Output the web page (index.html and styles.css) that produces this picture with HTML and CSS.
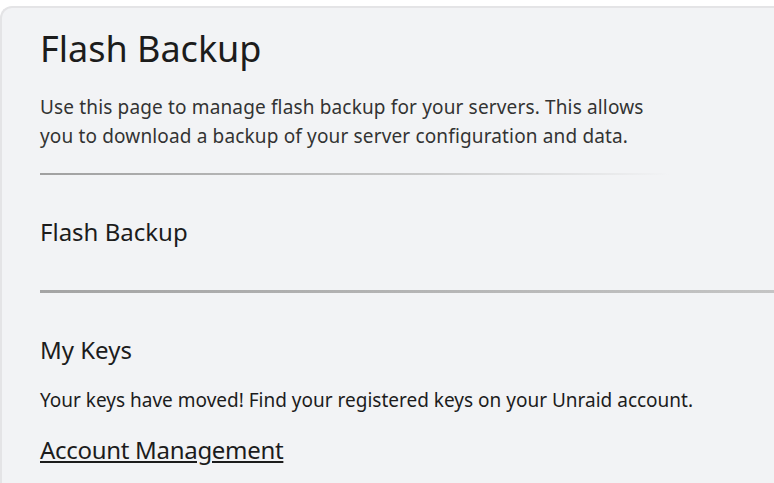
FILE: index.html
```html
<!DOCTYPE html>
<html lang="en">
<head>
    <meta charset="UTF-8">
    <title>Flash Backup</title>
    <link rel="stylesheet" href="styles.css">
</head>
<body>
<section class="panel">
    <h1 class="title">Flash Backup</h1>
    <p class="intro">Use this page to manage flash backup for your servers. This allows<br>you to download a backup of your server configuration and data.</p>
    <hr class="rule-fade">

    <h2 class="subtitle">Flash Backup</h2>
    <hr class="rule-full">

    <h2 class="subtitle">My Keys</h2>
    <p class="note">Your keys have moved! Find your registered keys on your Unraid account.</p>
    <p class="link-row"><a href="#">Account Management</a></p>
</section>
</body>
</html>
```

FILE: styles.css
```css
* {
    padding: 0;
    margin: 0;
    box-sizing: border-box;
}
html, body {
    height: 100%;
}
body {
    font-family: "Noto Sans", sans-serif;
    background-color: white;
    color: #1c1c1c;
    overflow: hidden;
}
.panel {
    margin-top: 6px;
    min-height: calc(100% - 6px);
    background-color: #f2f3f5;
    border-top: 2px solid #e4e4e6;
    border-left: 2px solid #e4e4e6;
    border-top-left-radius: 12px;
    padding: 19px 0 0 38px;
}
.title {
    font-size: 36px;
    font-weight: normal;
    line-height: 44px;
}
.intro {
    margin-top: 22px;
    font-size: 19px;
    line-height: 29px;
    letter-spacing: 0.15px;
    color: #333;
}
.rule-fade {
    margin-top: 22px;
    width: 630px;
    height: 2px;
    border: none;
    background-image: linear-gradient(90deg, #a0a0a0, #c8c8c8 60%, rgba(242,243,245,0));
}
.subtitle {
    font-size: 24px;
    font-weight: normal;
    line-height: 32px;
}
.rule-fade + .subtitle {
    margin-top: 41px;
}
.rule-full {
    margin-top: 42px;
    height: 3px;
    border: none;
    background-image: linear-gradient(90deg, #a4a4a4, #c4c4c4);
}
.rule-full + .subtitle {
    margin-top: 41px;
}
.note {
    margin-top: 21px;
    font-size: 19px;
    line-height: 26px;
}
.link-row {
    margin-top: 21px;
    font-size: 24px;
    line-height: 32px;
    letter-spacing: -0.3px;
}
a {
    color: #1c1c1c;
    text-decoration: underline;
}
```
